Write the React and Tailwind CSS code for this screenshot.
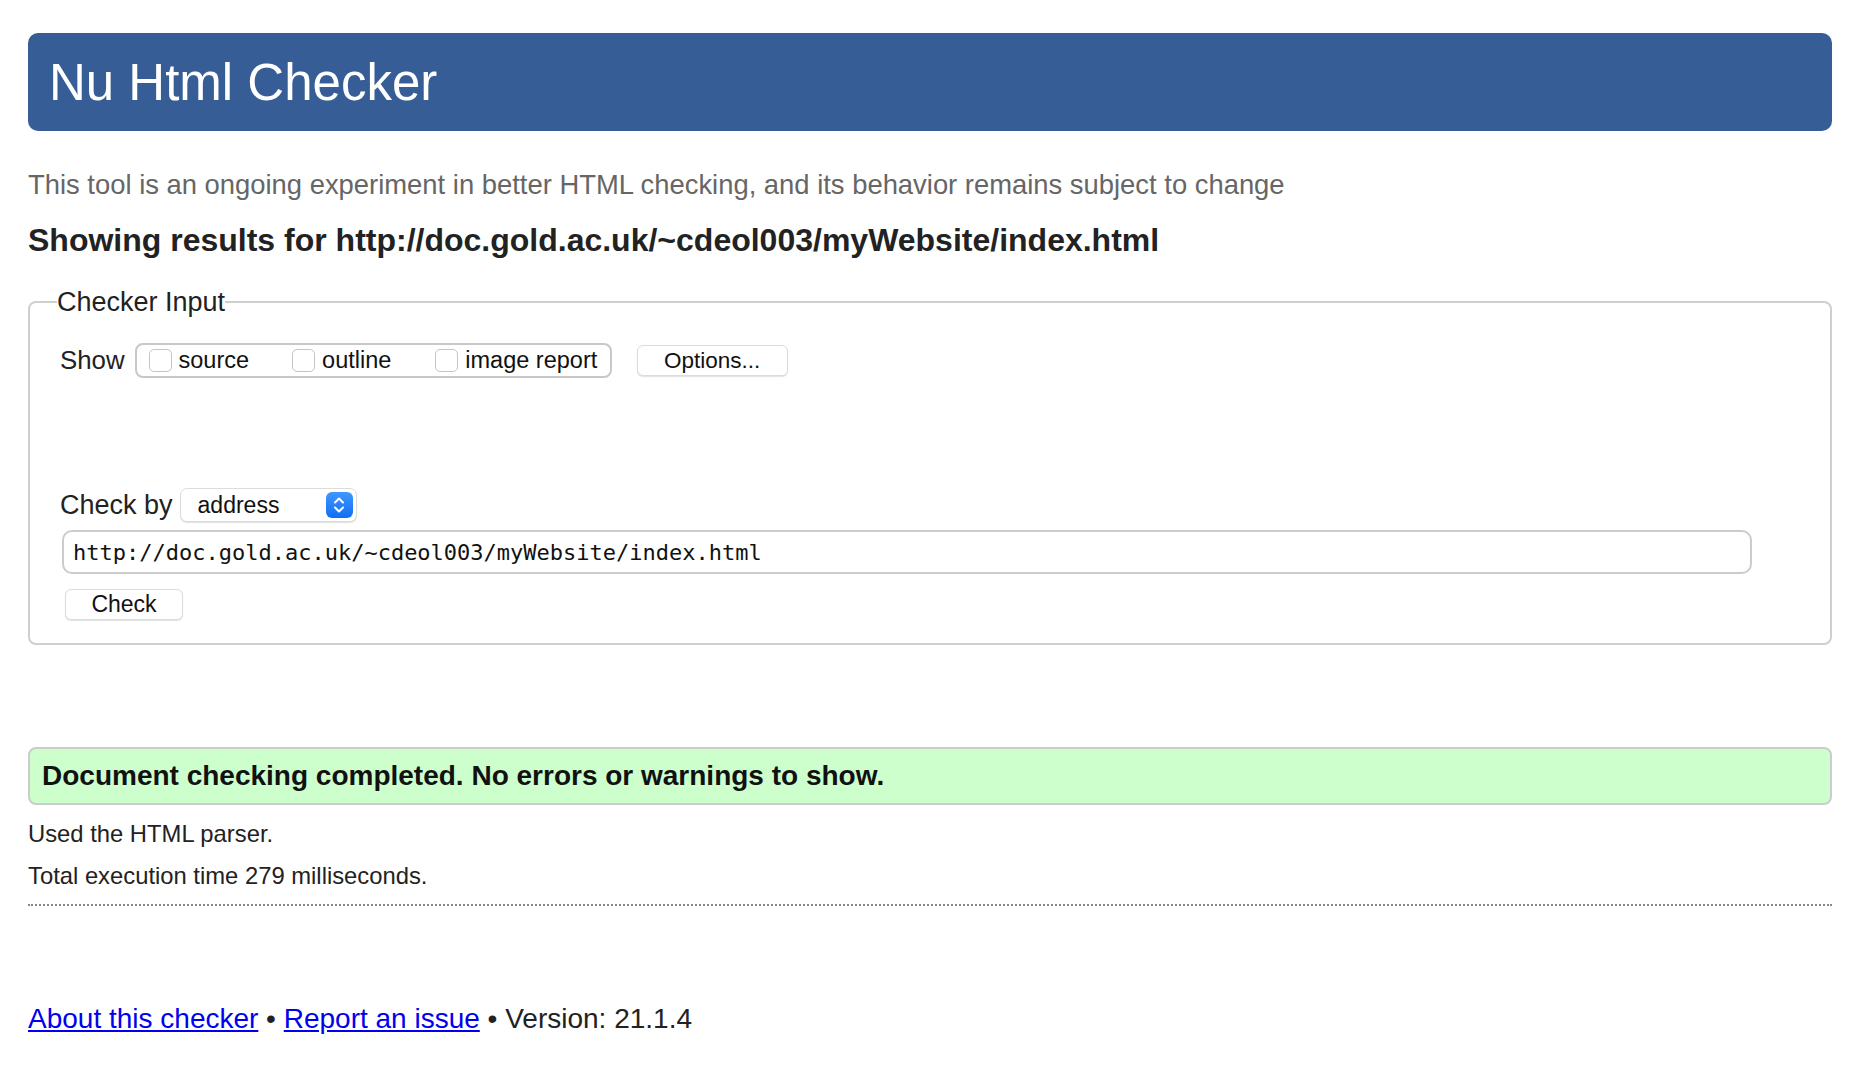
export default function App() {
  const sans = { fontFamily: '"Liberation Sans", Arial, sans-serif' };

  return (
    <div className="min-h-screen bg-white px-[28px] pt-[33px] text-[#222]" style={sans}>
      <h1 className="flex h-[98px] items-center rounded-[10px] bg-[#365d95] pl-[21px] text-[51px] font-normal leading-none text-white">
        Nu Html Checker
      </h1>

      <p className="mt-[38px] text-[27.4px] leading-[32px] text-[#666]">
        This tool is an ongoing experiment in better HTML checking, and its behavior remains subject to change
      </p>

      <h2 className="mt-[20px] text-[32px] font-bold leading-[38px] text-[#222]">
        Showing results for http://doc.gold.ac.uk/~cdeol003/myWebsite/index.html
      </h2>

      <fieldset className="mt-[27px] rounded-[8px] border-2 border-[#cfcfcf] pb-[23px] pl-[27px] pt-[25px]">
        <legend className="text-[27px] leading-[32px] text-[#222]">Checker Input</legend>

        <div className="ml-[3px] flex h-[35px] items-center">
          <span className="text-[25.8px]">Show</span>
          <div className="ml-[10px] flex h-[35px] w-[477px] items-center rounded-[8px] border-2 border-[#c8c8c8] pl-[12px] text-[23.5px] text-[#111]">
            <label className="flex items-center gap-[7px]">
              <span className="block h-[23px] w-[23px] rounded-[5px] border-[1.5px] border-[#c4c4c4] bg-white" />
              source
            </label>
            <label className="ml-[43px] flex items-center gap-[7px]">
              <span className="block h-[23px] w-[23px] rounded-[5px] border-[1.5px] border-[#c4c4c4] bg-white" />
              outline
            </label>
            <label className="ml-[44px] flex items-center gap-[7px]">
              <span className="block h-[23px] w-[23px] rounded-[5px] border-[1.5px] border-[#c4c4c4] bg-white" />
              image report
            </label>
          </div>
          <button className="ml-[25px] flex h-[31px] w-[151px] items-center justify-center rounded-[6px] border border-[#dcdcdc] bg-white text-[22.5px] text-[#111] shadow-[0_1px_1px_rgba(0,0,0,0.12)]">
            Options...
          </button>
        </div>

        <div className="ml-[3px] mt-[110px] flex h-[34px] items-center">
          <span className="text-[27px]">Check by</span>
          <div className="ml-[7px] flex h-[34px] w-[177px] items-center justify-between rounded-[7px] border border-[#dcdcdc] bg-white pl-[17px] pr-[3px] text-[23px] text-[#111] shadow-[0_1px_1px_rgba(0,0,0,0.12)]">
            <span>address</span>
            <span className="flex h-[26px] w-[27px] items-center justify-center rounded-[6px] bg-gradient-to-b from-[#3f97ff] to-[#0f6ef2]">
              <svg width="12" height="20" viewBox="0 0 12 20" fill="none" stroke="white" strokeWidth="2" strokeLinecap="round" strokeLinejoin="round">
                <path d="M2 7.5 L6 3.5 L10 7.5" />
                <path d="M2 12.5 L6 16.5 L10 12.5" />
              </svg>
            </span>
          </div>
        </div>

        <div
          className="ml-[5px] mt-[8px] flex h-[44px] w-[1690px] items-center rounded-[10px] border-2 border-[#cccccc] pl-[9px] text-[22px] text-[#111]"
          style={{ fontFamily: '"DejaVu Sans Mono", "Liberation Mono", monospace' }}
        >
          http://doc.gold.ac.uk/~cdeol003/myWebsite/index.html
        </div>

        <button className="ml-[8px] mt-[15px] flex h-[31px] w-[118px] items-center justify-center rounded-[6px] border border-[#dcdcdc] bg-white text-[23px] text-[#111] shadow-[0_1px_1px_rgba(0,0,0,0.12)]">
          Check
        </button>
      </fieldset>

      <div className="mt-[102px] flex h-[58px] items-center rounded-[8px] border-2 border-[#cccccc] bg-[#ccffcc] pl-[12px]">
        <p className="text-[28px] font-bold leading-[32px] text-[#111]">
          Document checking completed. No errors or warnings to show.
        </p>
      </div>

      <p className="mt-[15px] text-[23.8px] leading-[28px]">Used the HTML parser.</p>
      <p className="mt-[14px] text-[23.8px] leading-[28px]">Total execution time 279 milliseconds.</p>

      <hr className="mt-[14px] border-0 border-t-2 border-dotted border-[#888]" />

      <p className="mt-[97px] text-[28px] leading-[32px]">
        <a href="#" className="text-[#0000ee] underline">About this checker</a>
        {' • '}
        <a href="#" className="text-[#0000ee] underline">Report an issue</a>
        {' • Version: 21.1.4'}
      </p>
    </div>
  );
}
